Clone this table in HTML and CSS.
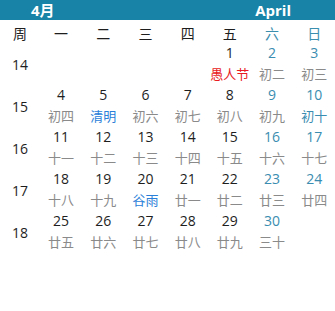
FILE: index.html
```html
<!DOCTYPE html>
<html>
<head>
<meta charset="utf-8">
<link rel="stylesheet" href="styles.css">
</head>
<body>
<div class="cal">
  <div class="bar"><span class="m-cn">4月</span><span class="m-en">April</span></div>
  <div class="grid">
    <div class="hd">周</div><div class="hd">一</div><div class="hd">二</div><div class="hd">三</div><div class="hd">四</div><div class="hd">五</div><div class="hd we">六</div><div class="hd we">日</div>

    <div class="wk">14</div>
    <div class="d"></div><div class="d"></div><div class="d"></div><div class="d"></div>
    <div class="d"><span class="n">1</span><span class="l hol">愚人节</span></div>
    <div class="d we"><span class="n">2</span><span class="l">初二</span></div>
    <div class="d we"><span class="n">3</span><span class="l">初三</span></div>

    <div class="wk">15</div>
    <div class="d"><span class="n">4</span><span class="l">初四</span></div>
    <div class="d"><span class="n">5</span><span class="l term">清明</span></div>
    <div class="d"><span class="n">6</span><span class="l">初六</span></div>
    <div class="d"><span class="n">7</span><span class="l">初七</span></div>
    <div class="d"><span class="n">8</span><span class="l">初八</span></div>
    <div class="d we"><span class="n">9</span><span class="l">初九</span></div>
    <div class="d we"><span class="n">10</span><span class="l term2">初十</span></div>

    <div class="wk">16</div>
    <div class="d"><span class="n">11</span><span class="l">十一</span></div>
    <div class="d"><span class="n">12</span><span class="l">十二</span></div>
    <div class="d"><span class="n">13</span><span class="l">十三</span></div>
    <div class="d"><span class="n">14</span><span class="l">十四</span></div>
    <div class="d"><span class="n">15</span><span class="l">十五</span></div>
    <div class="d we"><span class="n">16</span><span class="l">十六</span></div>
    <div class="d we"><span class="n">17</span><span class="l">十七</span></div>

    <div class="wk">17</div>
    <div class="d"><span class="n">18</span><span class="l">十八</span></div>
    <div class="d"><span class="n">19</span><span class="l">十九</span></div>
    <div class="d"><span class="n">20</span><span class="l term">谷雨</span></div>
    <div class="d"><span class="n">21</span><span class="l">廿一</span></div>
    <div class="d"><span class="n">22</span><span class="l">廿二</span></div>
    <div class="d we"><span class="n">23</span><span class="l">廿三</span></div>
    <div class="d we"><span class="n">24</span><span class="l">廿四</span></div>

    <div class="wk">18</div>
    <div class="d"><span class="n">25</span><span class="l">廿五</span></div>
    <div class="d"><span class="n">26</span><span class="l">廿六</span></div>
    <div class="d"><span class="n">27</span><span class="l">廿七</span></div>
    <div class="d"><span class="n">28</span><span class="l">廿八</span></div>
    <div class="d"><span class="n">29</span><span class="l">廿九</span></div>
    <div class="d we"><span class="n">30</span><span class="l">三十</span></div>
    <div class="d"></div>
  </div>
</div>
</body>
</html>
```
FILE: styles.css
```css
html, body {
  margin: 0;
  padding: 0;
  background: #ffffff;
}
body {
  font-family: "Open Sans", "Noto Sans", "Noto Sans CJK SC", sans-serif;
  color: #1e1e1e;
}
.cal {
  width: 335px;
}
.bar {
  height: 20px;
  background: #1883a7;
  color: #ffffff;
  font-weight: bold;
  font-size: 15px;
  line-height: 20px;
  display: flex;
  justify-content: space-between;
  padding: 0 44px 0 31px;
}
.m-cn {
  font-family: "Open Sans", "Noto Sans CJK SC", sans-serif;
}
.grid {
  display: grid;
  grid-template-columns: 40px repeat(7, 42.2px);
  grid-template-rows: 23px repeat(5, 42px);
}
.hd {
  font-family: "Noto Sans CJK SC", sans-serif;
  font-size: 14px;
  line-height: 20px;
  padding-top: 3px;
  text-align: center;
}
.hd.we {
  color: #3c8eae;
}
.wk {
  font-size: 14px;
  display: flex;
  align-items: center;
  justify-content: center;
  padding-top: 1px;
}
.d {
  display: flex;
  flex-direction: column;
  align-items: center;
}
.n {
  font-size: 14px;
  line-height: 20px;
}
.l {
  font-family: "Noto Sans CJK SC", sans-serif;
  font-size: 13px;
  line-height: 21px;
  color: #8a8a8a;
}
.d.we .n {
  color: #3a8db0;
}
.l.hol {
  color: #e81a22;
}
.l.term {
  color: #2a80d8;
}
.l.term2 {
  color: #3a8db0;
}
```
